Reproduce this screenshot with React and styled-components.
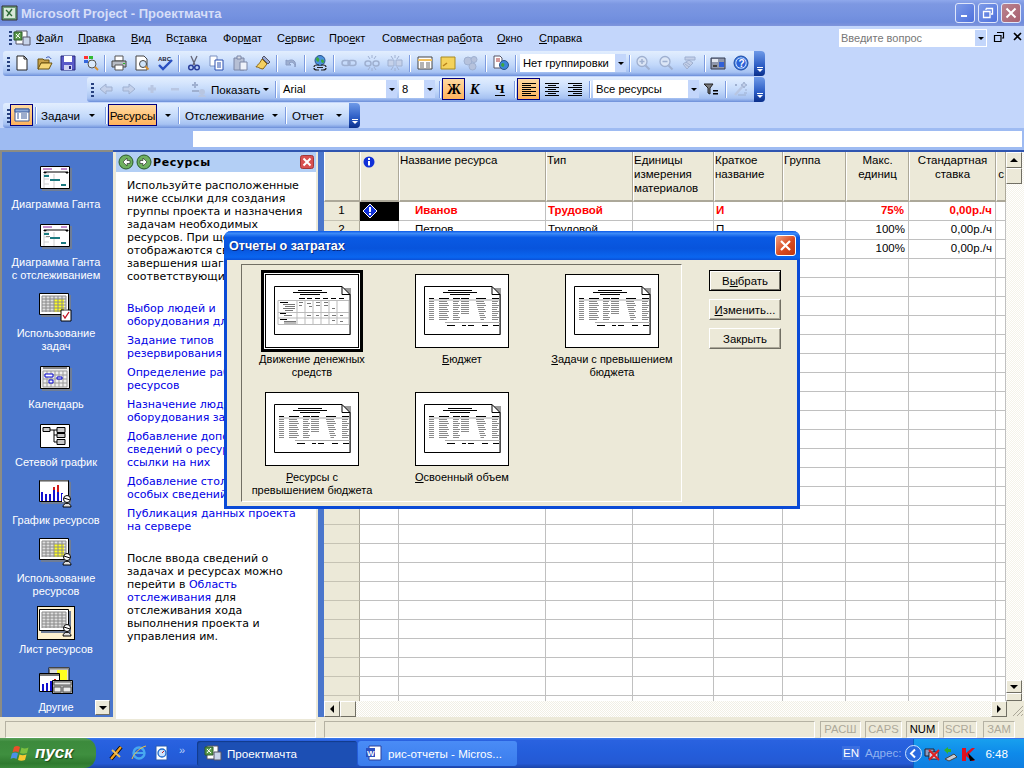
import React from 'react';
import styled, { createGlobalStyle, css } from 'styled-components';

const Global = createGlobalStyle`
  html, body { margin: 0; padding: 0; background: #fff; }
  * { box-sizing: border-box; }
  u { text-decoration: underline; text-underline-offset: 1px; }
`;
const UI = `"Liberation Sans", Arial, sans-serif`;
const WIDE = `"DejaVu Sans", Verdana, sans-serif`;

const Screen = styled.div`
  position: relative; width: 1024px; height: 768px; overflow: hidden;
  display: flex; flex-direction: column; font-family: ${UI}; font-size: 11px; color: #000;
  background: #c3d6fb;
`;
const TitleBar = styled.div`
  height: 26px; flex: none; display: flex; align-items: center; padding: 0 3px 0 2px;
  background: linear-gradient(180deg,#8fa8ec 0,#7d98e2 15%,#7592e0 60%,#6f8cdc 85%,#7f95dc 100%);
`;
const TitleText = styled.div`
  flex: 1; margin-left: 3px; font: bold 13px ${UI}; color: #d6def8; white-space: nowrap;
`;
const WinBtn = styled.div`
  width: 20px; height: 20px; margin-left: 3px; border: 1px solid #dfe6fa; border-radius: 3px;
  display: flex; align-items: center; justify-content: center;
  background: ${p => p.$red ? 'linear-gradient(135deg,#b9838f,#a8606f)' : 'linear-gradient(135deg,#7e9be8,#4d70dc)'};
`;
const Dock = styled.div`
  flex: none; height: 102px; background: #c3d6fb; display: flex; flex-direction: column;
`;
const MenuBar = styled.div`
  height: 24px; flex: none; display: flex; align-items: center; position: relative; padding-left: 7px;
`;
const Grip = styled.div`
  width: 3px; height: 14px; flex: none; margin: 0 ${p => p.$r ?? 0}px 0 2px;
  background: repeating-linear-gradient(180deg,#27417f 0 2px,transparent 2px 4px);
`;
const MenuItem = styled.span`
  position: absolute; top: 6px; left: ${p => p.$x}px; white-space: nowrap; font-size: 11px; line-height: 13px;
`;
const HelpBox = styled.div`
  position: absolute; left: 839px; top: 3px; width: 148px; height: 18px; background: #fff;
  display: flex; align-items: center; padding-left: 2px; color: #777; font-size: 11px;
`;
const HelpDrop = styled.div`
  position: absolute; right: 0; top: 0; width: 12px; height: 18px; background: #c3d6fb; border: 1px solid #fff; border-width: 1px 1px 1px 0;
  display: flex; align-items: center; justify-content: center;
`;
const Arrow = styled.i`
  display: block; flex: none; width: 0; height: 0; border: 3px solid transparent; border-top: 3px solid #000; border-bottom: 0;
`;
const MdiBtns = styled.div`
  position: absolute; left: 994px; top: 6px; width: 28px; display: flex; justify-content: space-between;
`;
const Toolbar = styled.div`
  height: 25px; flex: none; margin: 1px 0 0 ${p => p.$x}px; width: ${p => p.$w}px;
  display: flex; align-items: center; border-radius: 3px 4px 4px 3px; padding-left: 2px; position: relative;
  background: linear-gradient(180deg,#e2eefe 0,#d5e5fd 25%,#c2d8fa 55%,#a6c2f2 85%,#7e9fe2 96%,#6a8cd6 100%);
`;
const Sep = styled.i`
  display: block; flex: none; width: 1px; height: 17px; margin: 0 ${p => p.$r ?? 2}px 0 ${p => p.$l ?? 2}px; background: #7d9ce0; box-shadow: 1px 0 0 #fff;
`;
const Btn = styled.div`
  width: ${p => p.$w ?? 23}px; height: 22px; flex: none; display: flex; align-items: center; justify-content: center;
  font-size: 11.6px; white-space: nowrap; margin-top: -1px;
  ${p => p.$on && css`background: linear-gradient(180deg,#ffd9a0,#ffb35c); border: 1px solid #000080;`}
`;
const Chevron = styled.div`
  position: absolute; right: 0; top: 0; bottom: 0; width: 11px; border-radius: 0 4px 4px 0;
  background: linear-gradient(180deg,#6e9ae8,#2b5cc4 60%,#0a2f8a);
  display: flex; flex-direction: column; align-items: center; justify-content: flex-end; padding-bottom: 4px; gap: 1px;
`;
const ChevLine = styled.i`display:block;width:6px;height:1px;background:#fff;`;
const ChevTri = styled.i`display:block;width:0;height:0;border:3px solid transparent;border-top-color:#fff;border-bottom:0;`;
const Combo = styled.div`
  width: ${p => p.$w}px; height: 18px; flex: none; background: #fff; position: relative; margin-top: -1px; margin-right: ${p => p.$mr ?? 0}px;
  display: flex; align-items: center; padding-left: 3px; font-size: 11.2px; white-space: nowrap; overflow: hidden;
`;
const ComboDrop = styled.div`
  position: absolute; right: 0; top: 0; bottom: 0; width: 12px; background: #c3d6fb; border-left: 1px solid #fff;
  display: flex; align-items: center; justify-content: center;
`;
const Cmd = styled.div`
  width: ${p => p.$w}px; flex: none; margin: -1px 0 0 ${p => p.$l ?? 0}px; padding-right: ${p => p.$r ?? 0}px;
  display: flex; align-items: center; justify-content: ${p => p.$end ? 'flex-end' : 'space-between'}; font-size: 11.6px; white-space: nowrap;
`;

const EntryBand = styled.div`
  height: 22px; flex: none; background: #9ebbf2; padding: 3px 2px 3px 193px;
`;
const Entry = styled.div`height:16px;background:#fff;`;

const Workspace = styled.div`
  flex: 1; min-height: 0; display: flex; background: #ece9d8; border-top: 2px solid #2f55b0;
`;
const ViewBar = styled.div`
  width: 113px; flex: none; background: #4a76cc; border-left: 2px solid #8c8c84; border-top: 2px solid #8c8c84; position: relative;
  display: flex; flex-direction: column; align-items: center; padding: 14px 3px 0 0; margin: -2px 0 2px;
`;
const ViewItem = styled.div`
  width: 100%; display: flex; flex-direction: column; align-items: center; margin-bottom: 13px;
  color: #fff; line-height: 13px; font-size: 11px; text-align: center;
`;
const ViewIcon = styled.div`
  height: ${p => p.$sel ? 34 : 24}px; width: ${p => p.$sel ? 38 : 32}px; margin-bottom: ${p => p.$sel ? 3 : 8}px; margin-top: ${p => p.$sel ? -5 : 0}px;
  display: flex; align-items: center; justify-content: center;
  ${p => p.$sel && css`background:#fdf1d0;border:1px solid #000;`}
`;
const MoreBtn = styled.div`
  position: absolute; right: 3px; bottom: 2px; width: 15px; height: 15px; background: #ece9d8;
  border: 1px solid; border-color: #fff #716f64 #716f64 #fff; display:flex;align-items:center;justify-content:center;
`;
const TaskPane = styled.div`
  width: 200px; flex: none; margin-left: 3px; margin-right: 2px; background: #fff; display: flex; flex-direction: column; overflow: hidden;
`;
const PaneHead = styled.div`
  height: 20px; flex: none; background: #b3cff5; display: flex; align-items: center; padding-left: 2px; gap: 2px; position: relative;
  font: bold 11px ${WIDE}; letter-spacing: .6px;
`;
const PaneTitle = styled.span`margin-left:-1px;`;
const PaneClose = styled.div`position:absolute;right:2px;top:3px;`;
const PaneBody = styled.div`
  padding: 7px 0 0 11px; font: 11px/13px ${WIDE}; white-space: nowrap;
`;
const PaneLink = styled.a`display:block;color:#0000e6;margin-bottom:6px;`;
const InlineLink = styled.span`color:#0000e6;`;
const PanePara = styled.div`margin-bottom:${p=>p.$mb}px;`;
const SplitBlue = styled.div`width:6px;flex:none;background:#4a76cc;margin-bottom:2px;`;
const SheetArea = styled.div`
  flex: 1; min-width: 0; display: flex; flex-direction: column; background:#ece9d8;
`;
const SheetTop = styled.div`flex:1;min-height:0;display:flex;`;
const Grid = styled.div`flex:1;min-width:0;background:#fff;overflow:hidden;`;
const HeadRow = styled.div`display:flex;height:50px;`;
const HeadCell = styled.div`
  width:${p=>p.$w}px;flex:none;background:#ece9d8;border-right:1px solid #aca899;border-bottom:2px solid #aca899;border-left:1px solid #fff;
  padding:${p=>p.$pt??1}px 0 0;line-height:14px;font-size:11.5px;text-align:${p=>p.$c?'center':'left'};overflow:hidden;
`;
const Row = styled.div`display:flex;height:19px;`;
const RowNum = styled.div`
  width:36px;flex:none;background:#ece9d8;border-right:1px solid #aca899;border-bottom:1px solid #c6c3b4;text-align:center;line-height:15px;font-size:11.6px;
`;
const Cell = styled.div`
  width:${p=>p.$w}px;flex:none;border-right:1px solid #c0c0c0;border-bottom:1px solid #c0c0c0;line-height:16px;font-size:11.5px;white-space:nowrap;overflow:hidden;
  padding:0 ${p=>p.$pr??2}px 0 ${p=>p.$pl??2}px;text-align:${p=>p.$r?'right':'left'};
  ${p=>p.$hot&&css`color:#f00;font-weight:bold;`}
  ${p=>p.$sel&&css`background:#000;border:1px solid #000;border-width:1px 2px 2px 1px;display:flex;align-items:center;padding:0 0 0 1px;`}
`;
const VScroll = styled.div`
  width:18px;flex:none;display:flex;flex-direction:column;
  background:repeating-conic-gradient(#f5f3ea 0 25%,#fff 0 50%) 0 0/2px 2px;
`;
const ScrollBtn = styled.div`
  width:${p=>p.$w??16}px;height:${p=>p.$h??16}px;flex:none;background:#ece9d8;border:1px solid;border-color:#fff #716f64 #716f64 #fff;
  display:flex;align-items:center;justify-content:center;
`;
const ScrollFill = styled.div`flex:1;`;
const HScroll = styled.div`
  height:16px;flex:none;margin-bottom:2px;display:flex;
  background:repeating-conic-gradient(#f1efe4 0 25%,#fff 0 50%) 0 0/2px 2px;
`;
const ResizeGrip = styled.div`
  width:17px;height:18px;flex:none;background:#ece9d8;
`;
const UpTri = styled.i`display:block;width:0;height:0;border:4px solid transparent;border-bottom:4px solid #000;border-top:0;`;
const DownTri = styled.i`display:block;width:0;height:0;border:4px solid transparent;border-top:4px solid #000;border-bottom:0;`;
const LeftTri = styled.i`display:block;width:0;height:0;border:4px solid transparent;border-right:4px solid #000;border-left:0;`;
const RightTri = styled.i`display:block;width:0;height:0;border:4px solid transparent;border-left:4px solid #000;border-right:0;`;

const StatusBar = styled.div`
  height:19px;flex:none;background:#ece9d8;display:flex;align-items:center;padding-top:1px;padding-left:5px;
`;
const StatusField = styled.div`
  height:17px;flex:none;width:${p=>p.$w}px;margin-right:${p=>p.$mr??4}px;border:1px solid;border-color:#b5b2a3 #fff #fff #b5b2a3;
  display:flex;align-items:center;justify-content:center;font-size:11.2px;color:${p=>p.$on?'#000':'#aca899'};
`;
const Taskbar = styled.div`
  height:30px;flex:none;display:flex;align-items:center;position:relative;color:#fff;
  background:linear-gradient(180deg,#3b7cee 0,#2a62e0 8%,#245edb 45%,#2459d4 85%,#1b44a8 100%);
`;
const StartBtn = styled.div`
  width:96px;height:30px;flex:none;border-radius:0 12px 12px 0;display:flex;align-items:center;padding-left:11px;gap:4px;
  background:linear-gradient(180deg,#5ba25b 0,#3c8a3c 12%,#3f8f3f 55%,#2f7a2f 85%,#3a8a3a 100%);
  font:italic bold 17px ${UI};text-shadow:1px 1px 1px #1b4a1b;
`;
const Quick = styled.div`width:101px;flex:none;display:flex;align-items:center;padding-left:12px;gap:7px;`;
const Chev2 = styled.span`font-size:11px;color:#b9d0f8;margin:-6px 0 0 2px;`;
const TaskBtn = styled.div`
  width:${p=>p.$w}px;height:25px;flex:none;margin-right:1px;border-radius:3px;display:flex;align-items:center;padding-left:8px;gap:6px;font-size:11.6px;white-space:nowrap;
  background:${p=>p.$on?'#1c4fb4':'linear-gradient(180deg,#4a8cf6,#3a7cec)'};
  ${p=>p.$on&&css`box-shadow:inset 1px 1px 1px #123a8a;`}
`;
const Tray = styled.div`
  position:absolute;right:0;top:1px;bottom:0;width:111px;background:linear-gradient(180deg,#18a0ee,#0e8aea 50%,#0f7ee0);
  display:flex;align-items:center;gap:2px;border-left:1px solid #0c5ec0;
`;
const Lang = styled.span`position:absolute;left:842px;top:8px;background:#3a6ee0;padding:0 1px;font-size:11.6px;line-height:14px;`;
const Addr = styled.span`position:absolute;left:865px;top:8px;color:#90b2f0;font-size:11.6px;line-height:14px;`;
const Clock = styled.span`position:absolute;right:16px;top:8px;font-size:11.6px;line-height:14px;`;

const Dialog = styled.div`
  position:absolute;left:224px;top:231px;width:576px;height:278px;border-radius:7px 7px 0 0;
  background:#ece9d8;display:flex;flex-direction:column;border:3px solid #0a4ad6;border-top:0;
`;
const DlgTitle = styled.div`
  height:29px;flex:none;margin:0 -3px;border-radius:7px 7px 0 0;display:flex;align-items:center;padding:0 4px 0 5px;
  background:linear-gradient(180deg,#0a58e8 0,#3e8cf8 8%,#0a5ae4 22%,#0854dc 60%,#0a66f0 90%,#0a50d8 100%);
  color:#fff;font:bold 12.6px ${UI};text-shadow:1px 1px 0 #0a2a80;justify-content:space-between;
`;
const DlgClose = styled.div`
  width:21px;height:21px;border:1px solid #fff;border-radius:3px;background:linear-gradient(135deg,#f0a080,#d84a20 55%,#c03810);display:flex;align-items:center;justify-content:center;
`;
const DlgBody = styled.div`flex:1;min-height:0;display:flex;padding:4px 0 4px 14px;`;
const ListBox = styled.div`
  width:441px;flex:none;border:1px solid;border-color:#716f64 #fff #fff #716f64;box-shadow:inset 1px 1px 0 #ece9d8;
  display:grid;grid-template-columns:repeat(3,140px);column-gap:10px;grid-auto-rows:118px;padding-top:9px;align-content:start;
`;
const ReportItem = styled.div`display:flex;flex-direction:column;align-items:center;text-align:center;font-size:11px;line-height:13px;`;
const ReportThumbBox = styled.div`
  width:94px;height:74px;flex:none;background:#fff;border:1px solid #000;margin-bottom:5px;
  ${p=>p.$sel&&css`box-shadow:0 0 0 1px #fff,0 0 0 4px #000;`}
`;
const BtnCol = styled.div`margin-left:27px;padding-top:6px;display:flex;flex-direction:column;gap:8px;`;
const DlgBtn = styled.div`
  width:72px;height:21px;background:#ece9d8;border:1px solid;border-color:${p=>p.$def?'#000':'#fff #716f64 #716f64 #fff'};
  ${p=>p.$def&&css`box-shadow:inset 1px 1px 0 #fff,inset -1px -1px 0 #716f64;`}
  ${p=>!p.$def&&css`box-shadow:inset -1px -1px 0 #aca899;`}
  display:flex;align-items:center;justify-content:center;font-size:11.4px;
`;
const Svg = styled.svg`display:block;flex:none;overflow:visible;`;
const InfoSvg = styled(Svg)`margin:2px 0 0 1px;`;
const TrayChevron = styled(Svg)`margin-left:-9px;`;

/* ------- toolbar icons ------- */
const Ic = ({ children, s = 16 }) => <Svg width={s} height={s} viewBox="0 0 16 16">{children}</Svg>;
const Gr = '#9fb0d0';
const icons = {
  new: <><path d="M3 1h7l3 3v11H3z" fill="#fff" stroke="#222"/><path d="M10 1v3h3" fill="none" stroke="#222"/></>,
  open: <><path d="M1 4h5l1 1h5v3H4l-2 6H1z" fill="#c8a24a" stroke="#6a5210"/><path d="M4 8h11l-3 6H1z" fill="#f6d776" stroke="#6a5210"/><path d="M9 3c2-2 4-1 5 1" fill="none" stroke="#2a4ab0"/></>,
  save: <><path d="M1 1h14v14H1z" fill="#5a5ac8" stroke="#26267a"/><path d="M4 1h8v6H4z" fill="#fff"/><path d="M4 10h8v5H4z" fill="#cfd2f2"/><path d="M9 11h2v3H9z" fill="#26267a"/></>,
  find: <><path d="M1 1h4v3H1z" fill="#f33"/><path d="M6 1h4v3H6z" fill="#3b3"/><path d="M1 5h4v3H1z" fill="#36d"/><path d="M6 5h4v3H6z" fill="#fc3"/><circle cx="9" cy="9" r="4" fill="#dbeafc" stroke="#555"/><path d="M12 12l3 3" stroke="#d89030" strokeWidth="2"/></>,
  print: <><path d="M4 1h8v5H4z" fill="#fff" stroke="#555"/><path d="M1 6h14v6H1z" fill="#b8bcc4" stroke="#444"/><path d="M4 10h8v5H4z" fill="#fff" stroke="#555"/><path d="M12 8h2v1h-2z" fill="#2b2"/></>,
  prev: <><path d="M2 1h8l3 3v11H2z" fill="#fff" stroke="#444"/><circle cx="9" cy="9" r="3.5" fill="#cfe4fb" stroke="#444"/><path d="M11.5 11.5l3 3" stroke="#d89030" strokeWidth="2"/></>,
  spell: <><text x="1" y="6" fontSize="6" fontWeight="bold" fontFamily="Liberation Sans" fill="#223">ABC</text><path d="M2 10l4 4 9-9" fill="none" stroke="#2a50c0" strokeWidth="2.4"/></>,
  cut: <><path d="M5 1l4 9M11 1L7 10" stroke="#667" strokeWidth="1.3"/><circle cx="5" cy="12.5" r="2.3" fill="none" stroke="#2a3f9a" strokeWidth="1.5"/><circle cx="11" cy="12.5" r="2.3" fill="none" stroke="#2a3f9a" strokeWidth="1.5"/></>,
  copy: <><path d="M1 1h7v10H1z" fill="#fff" stroke="#7a90c0"/><path d="M6 5h8v10H6z" fill="#fff" stroke="#2a4fae"/><path d="M8 8h4M8 10h4M8 12h4" stroke="#2a4fae"/></>,
  paste: <><path d="M2 3h10v12H2z" fill="#b6bfd4" stroke="#7a86a6"/><path d="M5 1h4v3H5z" fill="#d8dde8" stroke="#7a86a6"/><path d="M8 7h7v8H8z" fill="#eef2fa" stroke="#7a86a6"/></>,
  brush: <><path d="M9 1l6 6-2 2-6-6z" fill="#98a8d0" stroke="#556"/><path d="M7 4l5 5-4 5c-3 0-6-3-7-2 0-1 3-2 6-8z" fill="#f4d060" stroke="#8a6410"/></>,
  undo: <><path d="M3 5v5h5L6 8c3-2 6 0 6 4 2-5-2-9-7-6z" fill={Gr} stroke="#8a9cc4"/></>,
  globe: <><circle cx="8" cy="5.5" r="5" fill="#4a90dc" stroke="#28548a"/><path d="M5 2c2 1 3 2 2 4S4 6 4 4zM9 5c2-1 3 0 3 2-1 2-3 1-3-2z" fill="#3ca83c"/><path d="M2 12c0-1.500 1-2 3-2h2M14 12c0-1.500-1-2-3-2H9M2 13c0 1 1 2 3 2h2M14 13c0 1-1 2-3 2H9" fill="none" stroke="#222" strokeWidth="1.2"/><path d="M5 12.500h6" stroke="#222"/></>,
  link: <><rect x="1" y="5.500" width="8" height="5" rx="2.500" fill="none" stroke={Gr} strokeWidth="1.500"/><rect x="7" y="5.500" width="8" height="5" rx="2.500" fill="none" stroke={Gr} strokeWidth="1.500"/></>,
  unlink: <><rect x="1" y="6" width="6" height="5" rx="2.500" fill="none" stroke={Gr} strokeWidth="1.500"/><rect x="9" y="6" width="6" height="5" rx="2.500" fill="none" stroke={Gr} strokeWidth="1.500"/><path d="M8 0v3M4 1l2 3M12 1l-2 3M8 13v3M4 15l2-3M12 15l-2-3" stroke={Gr}/></>,
  split: <><path d="M1 5h6v6H1zM9 5h6v6H9z" fill="#c6d2ea" stroke={Gr}/><path d="M8 0v3M4 1l2 3M12 1l-2 3M8 13v3M4 15l2-3M12 15l-2-3" stroke={Gr}/></>,
  list: <><path d="M1 2h14v12H1z" fill="#fff" stroke="#444"/><path d="M1 5h14" stroke="#f0c060" strokeWidth="2"/><path d="M3 8h4M3 10h4M3 12h4M9 8h4M9 10h4M9 12h4" stroke="#666"/></>,
  pane: <><path d="M1 2h14v12H1z" fill="#fff" stroke="#3a5a9a"/><path d="M1 2h14v3H1z" fill="#8aa8d8" stroke="#3a5a9a"/><path d="M3 7h2M3 9h2M3 11h2M7 7h6M7 9h6M7 11h6" stroke="#3a5a9a"/></>,
  note: <><path d="M1 2h14v12H1z" fill="#f4d25c" stroke="#a88a20"/><path d="M3 11l4-3" stroke="#b8801a" strokeWidth="1.500"/></>,
  gears: <><circle cx="5" cy="6" r="4" fill="#b6c2dc" stroke={Gr}/><circle cx="11" cy="4.500" r="3" fill="#b6c2dc" stroke={Gr}/><circle cx="9.500" cy="11.500" r="3.500" fill="#b6c2dc" stroke={Gr}/></>,
  pub: <><path d="M1 1h6l2 2v10H1z" fill="#fff" stroke="#556"/><path d="M3 4h4M3 6h4" stroke="#a33"/><circle cx="11" cy="10" r="4.500" fill="#3d86d8" stroke="#28548a"/><path d="M9 8c2 0 3 1 2 3s-3 0-3-1z" fill="#3ca83c"/></>,
  zin: <><circle cx="7" cy="6.500" r="5" fill="#dce6f6" stroke={Gr} strokeWidth="1.300"/><path d="M4.500 6.500h5M7 4v5" stroke={Gr} strokeWidth="1.500"/><path d="M10.500 10.500l4 4" stroke={Gr} strokeWidth="2"/></>,
  zout: <><circle cx="7" cy="6.500" r="5" fill="#dce6f6" stroke={Gr} strokeWidth="1.300"/><path d="M4.500 6.500h5" stroke={Gr} strokeWidth="1.500"/><path d="M10.500 10.500l4 4" stroke={Gr} strokeWidth="2"/></>,
  goto: <><path d="M4 2h10v3H4zM2 9l6-4 4 3-6 6z" fill="#c3cfe8" stroke={Gr}/><path d="M5 7l4 3M4 9l4 3" stroke={Gr}/></>,
  cam: <><path d="M1 3h14v11H1z" fill="#9098ac" stroke="#333a50"/><path d="M2 4h6v3H2z" fill="#e4e8f0"/><rect x="9" y="7" width="5" height="5" fill="#3060d8"/><path d="M3 10h4v2H3z" fill="#444"/></>,
  help: <><circle cx="8" cy="8" r="7" fill="#3e7fe6" stroke="#1c47a0"/><circle cx="8" cy="8" r="5.500" fill="#fff"/><circle cx="8" cy="8" r="4.800" fill="#2a62d8"/><text x="5.500" y="11.500" fontSize="10" fontWeight="bold" fontFamily="Liberation Sans" fill="#fff">?</text></>,
  left: <path d="M8 3v3h6v4H8v3L2 8z" fill="#c3d0ea" stroke={Gr}/>,
  right: <path d="M8 3v3H2v4h6v3l6-5z" fill="#c3d0ea" stroke={Gr}/>,
  plus: <path d="M6.500 4h3v2.500H12v3H9.500V12h-3V9.500H4v-3h2.500z" fill="#b8c6e2"/>,
  minus: <path d="M4 7h8v2.500H4z" fill="#b8c6e2"/>,
  pm: <><path d="M4 1h2v2h2v2H6v2H4V5H2V3h2zM2 9h7v2H2z" fill="#9fb0d0"/><circle cx="12" cy="11" r="3" fill="#b8c6e2"/><path d="M8 16c0-3 8-3 8 0z" fill="#b8c6e2"/></>,
  b: <text x="1" y="13" fontSize="14" fontWeight="bold" fontFamily="Liberation Serif" fill="#000">Ж</text>,
  i: <text x="1" y="13" fontSize="14" fontStyle="italic" fontWeight="bold" fontFamily="Liberation Serif" fill="#000">К</text>,
  u: <><text x="3" y="12" fontSize="13" fontWeight="bold" fontFamily="Liberation Serif" fill="#000">Ч</text><path d="M3 14.500h10" stroke="#000"/></>,
  al: <path d="M1 2.500h14M1 4.500h9M1 6.500h14M1 8.500h9M1 10.500h14M1 12.500h9M1 14.500h14" stroke="#000" fill="none"/>,
  ac: <path d="M1 2.500h14M4 4.500h8M1 6.500h14M4 8.500h8M1 10.500h14M4 12.500h8M1 14.500h14" stroke="#000" fill="none"/>,
  ar: <path d="M1 2.500h14M6 4.500h9M1 6.500h14M6 8.500h9M1 10.500h14M6 12.500h9M1 14.500h14" stroke="#000" fill="none"/>,
  filter: <><path d="M1 3h9L7 7v6L5 12V7z" fill="#777" stroke="#222"/><path d="M10 9h5v1.500h-5zM10 12h5v1.500h-5z" fill="#000"/></>,
  wiz: <><path d="M3 14L11 5" stroke="#b8c6e2" strokeWidth="2.500"/><path d="M12 1l1 2 2 1-2 1-1 2-1-2-2-1 2-1zM4 3l1 1-1 1-1-1zM13 9h2M12 12h3M6 14h8" stroke={Gr} fill="#c3d0ea"/></>,
  doc: <><path d="M2 1h11v13H2z" fill="#fff" stroke="#556"/><path d="M0 2h8v8H0z" fill="#5a9a4a" stroke="#2c5a2c"/><path d="M2 8l4-5M2 4l4 4" stroke="#fff"/><path d="M9 7h7v8H9z" fill="#c8d4ea" stroke="#556"/></>,
};
const T = ({ n, on, w }) => <Btn $on={on} $w={w}><Ic>{icons[n]}</Ic></Btn>;

/* ------- view bar icons ------- */
const Card = ({ children, w = 32, h = 25 }) => (
  <Svg width={w} height={h} viewBox="0 0 32 25">
    <path d="M2 2h30v23H2z" fill="#6f7d96"/>
    <path d="M.5.500h29v22H.5z" fill="#fff" stroke="#000"/>
    {children}
  </Svg>
);
const sheetGrid = (x0, x1, y0, y1, dx, dy) => {
  const d = [];
  for (let x = x0; x <= x1; x += dx) d.push(`M${x} ${y0}V${y1}`);
  for (let y = y0; y <= y1; y += dy) d.push(`M${x0} ${y}H${x1}`);
  return d.join('');
};
const Person = () => <><circle cx="28" cy="19" r="3.500" fill="#fff" stroke="#000"/><path d="M24 27c0-5 8-5 8 0z" fill="#ddd" stroke="#000"/><path d="M25 18l6 2" stroke="#000"/></>;
const GanttIcon = ({ alt }) => (
  <Card>
    <path d="M3 3h9M21 3h6" stroke="#8a1a9a"/><path d="M4 6h24" stroke="#000"/><path d="M3 6l2 2 2-2zM25 6l2 2 2-2z" fill="#000"/>
    <path d="M4 8h5M4 13h5M4 18h5M14 8v14M4 8v14" stroke="#cfcfcf"/>
    <path d="M4 9h5v2H4z" fill="#1a7a80"/><path d="M10 13h10v2H10z" fill="#1a7a80"/><path d="M21 18h5v2h-5z" fill="#1a7a80"/>
    {alt && <path d="M6 12h4v1H6z" fill="#888"/>}
  </Card>
);
const TableCard = ({ children, yellow, badge }) => (
  <Svg width={34} height={28} viewBox="0 0 34 28">
    <path d="M2 2h30v22H2z" fill="#6f7d96"/>
    <path d="M.5.500h29v21H.5z" fill="#fff" stroke="#000"/>
    <path d="M3 3h24v16H3z" fill="#dedede"/>
    {yellow && <path d="M15 6h10v13H15z" fill="#ffff20"/>}
    <path d={sheetGrid(3, 27, 3, 19, 4, 3)} stroke="#8a8a8a" fill="none"/>
    {children}
    {badge === 'clip' && <><path d="M22 17h10v11H22z" fill="#fff" stroke="#000"/><path d="M24 22l2 3 4-6" stroke="#c01020" fill="none" strokeWidth="1.300"/><path d="M25 16h4v2h-4z" fill="#999"/></>}
    {badge === 'person' && <Person/>}
  </Svg>
);
const CalIcon = () => (
  <Svg width={32} height={25} viewBox="0 0 32 25">
    <path d="M2 2h30v23H2z" fill="#6f7d96"/><path d="M.5.500h29v22H.5z" fill="#eee" stroke="#000"/>
    <path d={sheetGrid(3, 27, 5, 21, 4, 4)} stroke="#999" fill="none"/>
    <path d="M5 8h8v3H5z" fill="#fff" stroke="#0000d0"/><path d="M17 11h5v2h-5z" fill="#fff" stroke="#0000d0"/><path d="M9 14h4v3H9z" fill="#fff" stroke="#0000d0"/>
    <path d="M3 2h24" stroke="#888" strokeWidth="2"/>
  </Svg>
);
const NetIcon = () => (
  <Svg width={32} height={25} viewBox="0 0 32 25">
    <path d="M.5.500h29v23H.5z" fill="#fff" stroke="#000"/>
    <path d="M10 6h7M14 6v12M14 11h3M14 18h3" stroke="#000" fill="none"/>
    <path d="M3 3.500h7v4H3zM17 3.500h8v5h-8zM17 9.500h8v4h-8zM17 15.500h8v5h-8z" fill="#c8c8c8" stroke="#000"/>
  </Svg>
);
const GraphIcon = () => (
  <Svg width={34} height={28} viewBox="0 0 34 28">
    <path d="M2 2h30v22H2z" fill="#6f7d96"/><path d="M.5.500h29v21H.5z" fill="#fff" stroke="#000"/>
    <path d="M1 1h28" stroke="#888" strokeWidth="1.500"/>
    <path d="M2 12h2v9H2zM6 14h2v7H6zM10 14h2v7h-2zM14 9h2v12h-2zM22 13h2v8h-2z" fill="#1010d0"/>
    <path d="M18 5h2v16h-2z" fill="#d01818"/><path d="M14 7h2v3h-2z" fill="#d01818"/><path d="M18 12h2v9h-2z" fill="#1010d0"/>
    <path d="M23 14h6v8h-6z" fill="#fff"/><Person/>
  </Svg>
);
const OtherIcon = () => (
  <Svg width={34} height={28} viewBox="0 0 34 28">
    <path d="M10 .500h20v18H10z" fill="#dedede" stroke="#000"/><path d="M18 3h10v12H18z" fill="#ffff20"/><path d="M10 .500h20v2H10z" fill="#888"/>
    <path d="M.5 6.500h20v18H.5z" fill="#fff" stroke="#000"/><path d="M1 7h19v2H1z" fill="#777"/>
    <path d="M3 17h2v7H3zM7 16h2v8H7zM11 14h2v10h-2z" fill="#1010d0"/><path d="M15 12h2v12h-2z" fill="#d01818"/>
    <path d="M13.500 13.500h20v13h-20z" fill="#b0b0b0" stroke="#000"/><path d="M15 15h17v3H15zM15 20h7v5h-7zM24 20h8v5h-8z" fill="#ececec" stroke="#555"/>
  </Svg>
);

/* ------- report thumbnails ------- */
const PageFrame = ({ children }) => (
  <Svg width={92} height={72} viewBox="0 0 92 72">
    <path d="M10 13h75v47H10z" fill="#9a9a9a"/>
    <path d="M8.500 11.500H76l8 8v40H8.500z" fill="#fff" stroke="#000"/>
    <path d="M76 11.500v8h8" fill="none" stroke="#000"/>
    <path d="M32 15.500h24M27 17.500h34M34 19.500h20" stroke="#000"/>
    {children}
  </Svg>
);
const Generic = () => {
  const cols = [[13, 5], [23, 10], [37, 7], [45, 8], [60, 10], [76, 7]];
  const d = [];
  for (let y = 26; y <= 44; y += 2) {
    cols.forEach(([x, w], i) => {
      const sh = (y * (i + 3)) % 3;
      const hide = i === 3 && y > 38;
      if (!hide) d.push(`M${x + (i === 4 ? (y - 26) / 4 : 0)} ${y + .5}h${Math.max(1, w - sh - (i === 4 ? (y - 26) / 4 : 0))}`);
    });
  }
  return (
    <PageFrame>
      <path d={cols.map(([x, w]) => `M${x} 23.500h${w}`).join('')} stroke="#000"/>
      <path d="M13 25h70" stroke="#aaa"/>
      <path d={d.join('')} stroke="#8a8a8a"/>
      <path d="M29 47.500h55" stroke="#aaa" strokeWidth="1"/>
      <path d="M31 50.500h8M46 50.500h4M52 50.500h6M66 50.500h6M77 50.500h6" stroke="#000"/>
    </PageFrame>
  );
};
const CashFlow = () => (
  <PageFrame>
    <path d="M33 23.500h6M41 23.500h5M49 23.500h5M57 23.500h5M65 23.500h5M73 23.500h5" stroke="#000"/>
    <path d="M12 25.500h71v24H12zM12 37.500h71M12 43h71M31 25v24M39 25v24M47 25v24M55 25v24M63 25v24M71 25v24" fill="none" stroke="#bbb"/>
    <path d="M14 27.500h8M14 38.500h6M14 44.500h7" stroke="#000"/>
    <path d="M17 29.500h12M19 31.500h10M17 33.500h12M19 35.500h8M18 40.500h8M18 46.500h12M18 48h12M33 27.500h4M33 30.500h3M41 28.500h4M43 31.500h3M50 27.500h4M50 30.500h4M58 27.500h4M58 30.500h4M66 33.500h3M41 40.500h4M50 40.500h3M58 40.500h4M66 40.500h4M74 40.500h3M66 45.500h3M74 46.500h3" stroke="#777"/>
  </PageFrame>
);

const cols = { name: 147, type: 87, units: 81, short: 69, group: 63, max: 63, rate: 87, tail: 10 };
const emptyRows = Array.from({ length: 24 });
const mark = (t, i) => <span>{t.slice(0, i)}<u>{t[i]}</u>{t.slice(i + 1)}</span>;

const View = ({ icon, children, sel }) => (
  <ViewItem><ViewIcon $sel={sel}>{icon}</ViewIcon><span>{children}</span></ViewItem>
);
const Bc = () => <><ChevLine/><ChevTri/></>;

export default function App() {
  return (
    <Screen>
      <Global />
      <TitleBar>
        <Ic><path d="M0 1h15v14H0z" fill="#6fa07a" stroke="#333"/><path d="M2 3h11v10H2z" fill="#d9e8d8"/><path d="M5 11l5-7M4 5l6 6" stroke="#2c6a38" strokeWidth="1.400"/></Ic>
        <TitleText>Microsoft Project - Проектмачта</TitleText>
        <WinBtn><Svg width="12" height="12" viewBox="0 0 12 12"><path d="M2 8h6v2H2z" fill="#fff"/></Svg></WinBtn>
        <WinBtn><Svg width="12" height="12" viewBox="0 0 12 12"><path d="M4 1.500h6.500V7H9M4 1.500V3M1.500 4.500H8V10.500H1.500z" fill="none" stroke="#fff" strokeWidth="1.300"/></Svg></WinBtn>
        <WinBtn $red><Svg width="12" height="12" viewBox="0 0 12 12"><path d="M1.500 1.500l9 9M10.500 1.500l-9 9" stroke="#fff" strokeWidth="2"/></Svg></WinBtn>
      </TitleBar>
      <Dock>
        <MenuBar>
          <Grip $r={2} />
          <Ic>{icons.doc}</Ic>
          {[['Файл', 36, 0], ['Правка', 78, 0], ['Вид', 131, 0], ['Вставка', 166, 2], ['Формат', 223, 3], ['Сервис', 277, 1], ['Проект', 329, 3], ['Совместная работа', 382, 13], ['Окно', 497, 0], ['Справка', 539, 0]].map(([t, x, i]) => (
            <MenuItem key={t} $x={x}>{mark(t, i)}</MenuItem>
          ))}
          <HelpBox>Введите вопрос<HelpDrop><Arrow /></HelpDrop></HelpBox>
          <MdiBtns>
            <Svg width="10" height="10" viewBox="0 0 10 10"><path d="M3 .500h6.500V6H8M.5 3.500H7v6H.5z" fill="none" stroke="#000" strokeWidth="1.200"/></Svg>
            <Svg width="9" height="9" viewBox="0 0 9 9"><path d="M1 1l7 7M8 1L1 8" stroke="#000" strokeWidth="1.600"/></Svg>
          </MdiBtns>
        </MenuBar>
        <Toolbar $x={3} $w={762}>
          <Grip />
          <T n="new"/><T n="open"/><T n="save"/><T n="find"/><Sep/>
          <T n="print"/><T n="prev"/><T n="spell"/><Sep $r={3}/>
          <T n="cut"/><T n="copy"/><T n="paste"/><T n="brush"/><Sep/>
          <T n="undo"/><Sep $r={3}/>
          <T n="globe"/><Sep $r={3}/>
          <T n="link"/><T n="unlink"/><T n="split"/><Sep $l={3} $r={3}/>
          <T n="list"/><T n="note"/><T n="gears"/><Sep $l={3} $r={3}/>
          <T n="pub"/><Sep $l={3} $r={4}/>
          <Combo $w={106}>Нет группировки<ComboDrop><Arrow/></ComboDrop></Combo><Sep $l={3} $r={1}/>
          <T n="zin"/><T n="zout"/><T n="goto"/><Sep $l={4} $r={1}/>
          <T n="cam"/><T n="help"/>
          <Chevron><Bc/></Chevron>
        </Toolbar>
        <Toolbar $x={87} $w={678}>
          <Grip />
          <T n="left"/><T n="right"/><T n="plus"/><T n="minus"/><T n="pm"/>
          <Cmd $w={58} $l={2}>Показать<Arrow/></Cmd><Sep $l={6} $r={4}/>
          <Combo $w={117} $mr={2}>Arial<ComboDrop><Arrow/></ComboDrop></Combo>
          <Combo $w={36}>8<ComboDrop><Arrow/></ComboDrop></Combo><Sep $l={4} $r={2}/>
          <T n="b" on/><T n="i"/><T n="u"/><Sep $l={3} $r={2}/>
          <T n="al" on/><T n="ac"/><T n="ar"/><Sep $l={3} $r={3}/>
          <Combo $w={106}>Все ресурсы<ComboDrop><Arrow/></ComboDrop></Combo>
          <T n="filter"/><Sep $l={3} $r={2}/>
          <T n="wiz"/>
          <Chevron><Bc/></Chevron>
        </Toolbar>
        <Toolbar $x={3} $w={357}>
          <Grip />
          <T n="pane" on/><Sep/>
          <Cmd $w={62} $l={3} $r={8}>Задачи<Arrow/></Cmd><Sep/>
          <Btn $on $w={49}>Ресурсы</Btn><Cmd $w={19} $r={5} $end><Arrow/></Cmd><Sep/>
          <Cmd $w={98} $l={4} $r={5}>Отслеживание<Arrow/></Cmd><Sep/>
          <Cmd $w={55} $l={4} $r={5}>Отчет<Arrow/></Cmd>
          <Chevron><Bc/></Chevron>
        </Toolbar>
      </Dock>
      <EntryBand><Entry /></EntryBand>
      <Workspace>
        <ViewBar>
          <View icon={<GanttIcon />}>Диаграмма Ганта</View>
          <View icon={<GanttIcon alt />}>Диаграмма Ганта<br/>с отслеживанием</View>
          <View icon={<TableCard yellow badge="clip" />}>Использование<br/>задач</View>
          <View icon={<CalIcon />}>Календарь</View>
          <View icon={<NetIcon />}>Сетевой график</View>
          <View icon={<GraphIcon />}>График ресурсов</View>
          <View icon={<TableCard yellow badge="person" />}>Использование<br/>ресурсов</View>
          <View sel icon={<TableCard badge="person" />}>Лист ресурсов</View>
          <View icon={<OtherIcon />}>Другие</View>
          <MoreBtn><DownTri /></MoreBtn>
        </ViewBar>
        <TaskPane>
          <PaneHead>
            <Ic><circle cx="8" cy="8" r="7" fill="#6fb060" stroke="#2a5a2a"/><path d="M9 4L5 8l4 4V9.500h3v-3H9z" fill="#fff" stroke="#222" strokeWidth=".6"/></Ic>
            <Ic><circle cx="8" cy="8" r="7" fill="#6fb060" stroke="#2a5a2a"/><path d="M7 4l4 4-4 4V9.500H4v-3h3z" fill="#fff" stroke="#222" strokeWidth=".6"/></Ic>
            <PaneTitle>Ресурсы</PaneTitle>
            <PaneClose><Svg width="14" height="14" viewBox="0 0 14 14"><rect x=".5" y=".5" width="13" height="13" rx="2" fill="#d85050" stroke="#a03838"/><path d="M3.500 3.500l7 7M10.500 3.500l-7 7" stroke="#fff" strokeWidth="2"/></Svg></PaneClose>
          </PaneHead>
          <PaneBody>
            <PanePara $mb={19}>
              Используйте расположенные<br/>ниже ссылки для создания<br/>группы проекта и назначения<br/>задачам необходимых<br/>ресурсов. При щелчке ссылки<br/>отображаются сведения о<br/>завершения шагов в<br/>соответствующих областях.
            </PanePara>
            <PaneLink>Выбор людей и<br/>оборудования для проекта</PaneLink>
            <PaneLink>Задание типов<br/>резервирования</PaneLink>
            <PaneLink>Определение рабочего<br/>ресурсов</PaneLink>
            <PaneLink>Назначение людей и<br/>оборудования задачам</PaneLink>
            <PaneLink>Добавление дополнительных<br/>сведений о ресурсах и<br/>ссылки на них</PaneLink>
            <PaneLink>Добавление столбцов<br/>особых сведений</PaneLink>
            <PaneLink>Публикация данных проекта<br/>на сервере</PaneLink>
            <PanePara $mb={0}>
              <br/>После ввода сведений о<br/>задачах и ресурсах можно<br/>перейти в <InlineLink>Область<br/>отслеживания</InlineLink> для<br/>отслеживания хода<br/>выполнения проекта и<br/>управления им.
            </PanePara>
          </PaneBody>
        </TaskPane>
        <SplitBlue />
        <SheetArea>
          <SheetTop>
            <Grid>
              <HeadRow>
                <HeadCell $w={36} />
                <HeadCell $w={39}><InfoSvg width="14" height="14" viewBox="0 0 14 14"><circle cx="7" cy="7" r="5.500" fill="#1030d8"/><path d="M6 3h2v2H6zM6 6h2v4.500H6z" fill="#fff"/></InfoSvg></HeadCell>
                <HeadCell $w={cols.name}>Название ресурса</HeadCell>
                <HeadCell $w={cols.type}>Тип</HeadCell>
                <HeadCell $w={cols.units}>Единицы измерения материалов</HeadCell>
                <HeadCell $w={cols.short}>Краткое название</HeadCell>
                <HeadCell $w={cols.group}>Группа</HeadCell>
                <HeadCell $w={cols.max} $c>Макс. единиц</HeadCell>
                <HeadCell $w={cols.rate} $c>Стандартная ставка</HeadCell>
                <HeadCell $w={cols.tail} $c $pt={15}>с</HeadCell>
              </HeadRow>
              <Row>
                <RowNum>1</RowNum>
                <Cell $w={39} $sel><Svg width="18" height="16" viewBox="0 0 18 16"><path d="M8 1l7 7-7 7-7-7z" fill="#1030d8" stroke="#fff"/><path d="M7 4h2v5H7zM7 10h2v2H7z" fill="#fff"/></Svg></Cell>
                <Cell $w={cols.name} $hot $pl={16}>Иванов</Cell>
                <Cell $w={cols.type} $hot>Трудовой</Cell>
                <Cell $w={cols.units} />
                <Cell $w={cols.short} $hot>И</Cell>
                <Cell $w={cols.group} />
                <Cell $w={cols.max} $r $hot $pr={4}>75%</Cell>
                <Cell $w={cols.rate} $r $hot $pr={3}>0,00р./ч</Cell>
                <Cell $w={cols.tail} />
              </Row>
              <Row>
                <RowNum>2</RowNum>
                <Cell $w={39} />
                <Cell $w={cols.name} $pl={16}>Петров</Cell>
                <Cell $w={cols.type}>Трудовой</Cell>
                <Cell $w={cols.units} />
                <Cell $w={cols.short}>П</Cell>
                <Cell $w={cols.group} />
                <Cell $w={cols.max} $r $pr={3}>100%</Cell>
                <Cell $w={cols.rate} $r $pr={3}>0,00р./ч</Cell>
                <Cell $w={cols.tail} />
              </Row>
              <Row>
                <RowNum>3</RowNum>
                <Cell $w={39} />
                <Cell $w={cols.name} />
                <Cell $w={cols.type} />
                <Cell $w={cols.units} />
                <Cell $w={cols.short} />
                <Cell $w={cols.group} />
                <Cell $w={cols.max} $r $pr={3}>100%</Cell>
                <Cell $w={cols.rate} $r $pr={3}>0,00р./ч</Cell>
                <Cell $w={cols.tail} />
              </Row>
              {emptyRows.map((_, i) => (
                <Row key={i}>
                  <RowNum />
                  <Cell $w={39} /><Cell $w={cols.name} /><Cell $w={cols.type} /><Cell $w={cols.units} />
                  <Cell $w={cols.short} /><Cell $w={cols.group} /><Cell $w={cols.max} /><Cell $w={cols.rate} /><Cell $w={cols.tail} />
                </Row>
              ))}
            </Grid>
            <VScroll>
              <ScrollBtn $h={16}><UpTri /></ScrollBtn>
              <ScrollBtn $h={16} />
              <ScrollFill />
              <ScrollBtn $h={13}><DownTri /></ScrollBtn>
              <ScrollBtn $h={8} />
            </VScroll>
          </SheetTop>
          <HScroll>
            <ScrollBtn><LeftTri /></ScrollBtn>
            <ScrollBtn />
            <ScrollFill />
            <ScrollBtn><RightTri /></ScrollBtn>
            <ResizeGrip><Svg width="17" height="16" viewBox="0 0 17 16"><path d="M16 5L6 15M16 9l-6 6M16 13l-2 2" stroke="#aca899"/></Svg></ResizeGrip>
          </HScroll>
        </SheetArea>
      </Workspace>
      <StatusBar>
        <StatusField $w={311} $mr={8} />
        <StatusField $w={491} $mr={5} />
        <StatusField $w={41}>РАСШ</StatusField>
        <StatusField $w={37}>CAPS</StatusField>
        <StatusField $w={33} $on>NUM</StatusField>
        <StatusField $w={34} $mr={6}>SCRL</StatusField>
        <StatusField $w={32}>ЗАМ</StatusField>
      </StatusBar>
      <Taskbar>
        <StartBtn>
          <Svg width="20" height="18" viewBox="0 0 20 18"><path d="M3 3c2-1.500 4-1.500 6 0l-1.500 5.500c-2-1.400-4-1.400-6 0z" fill="#e8502a"/><path d="M10.500 3.500c2 1.300 4 1.300 7 0L16 9c-2.500 1-5 1-7 0z" fill="#7cc040"/><path d="M1 9.500c2-1.400 4-1.400 6 0L5.500 15c-2-1.400-4-1.400-6 0z" fill="#4a90e8"/><path d="M8.500 10.500c2 1 4.500 1 7 0L14 16c-2.500 1-5 1-7 0z" fill="#f8c830"/></Svg>
          пуск
        </StartBtn>
        <Quick>
          <Ic><path d="M3 14L13 2" stroke="#000" strokeWidth="4"/><path d="M3 14L13 2" stroke="#f0a020" strokeWidth="2.400"/><path d="M4 5l8 7" stroke="#e8c060" strokeWidth="2"/></Ic>
          <Ic><circle cx="8" cy="8" r="5.500" fill="none" stroke="#48a8f0" strokeWidth="2.400"/><path d="M3 8h10" stroke="#48a8f0" strokeWidth="2"/><path d="M1 14C3 8 10 2 15 1" fill="none" stroke="#f0c040"/></Ic>
          <Ic><path d="M2 1h11v14H2z" fill="#fff" stroke="#2a5ab0"/><circle cx="8" cy="8" r="4" fill="#cfe4fb" stroke="#1a6ad0" strokeWidth="1.300"/><path d="M8 8l2-2" stroke="#c02020"/></Ic>
          <Chev2>»</Chev2>
        </Quick>
        <TaskBtn $w={160} $on><Ic>{icons.doc}</Ic>Проектмачта</TaskBtn>
        <TaskBtn $w={159}>
          <Ic><path d="M3 1h12v14H3z" fill="#fff" stroke="#2a3f9a"/><path d="M0 3h9v9H0z" fill="#2a4fc0"/><text x="1" y="10.500" fontSize="8" fontWeight="bold" fontFamily="Liberation Sans" fill="#fff">W</text></Ic>
          рис-отчеты - Micros...
        </TaskBtn>
        <Lang>EN</Lang>
        <Addr>Адрес:</Addr>
        <Tray>
          <TrayChevron width="17" height="17" viewBox="0 0 17 17"><circle cx="8.500" cy="8.500" r="8" fill="#2a6ae0" stroke="#cfe6ff"/><path d="M10 4.500l-4 4 4 4" fill="none" stroke="#fff" strokeWidth="2"/></TrayChevron>
          <Ic><path d="M1 3h9v7H1z" fill="#8a9ac0" stroke="#223"/><path d="M5 6h9v7H5z" fill="#c8d4ea" stroke="#223"/><path d="M5 4l10 10M15 4L5 14" stroke="#e02020" strokeWidth="2"/></Ic>
          <Ic><path d="M2 4l4-3v2h3v3H6v2z" fill="#30b030"/><path d="M3 13l9-5 3 3-8 4z" fill="#c8ccd4" stroke="#444"/></Ic>
          <Ic><path d="M2 2h4v5l6-5h3L8 9l7 6h-3L6 10v5H2z" fill="#e01020"/><path d="M8 7l7 7-5 1z" fill="#000"/></Ic>
          <Clock>6:48</Clock>
        </Tray>
      </Taskbar>
      <Dialog>
        <DlgTitle>
          <span>Отчеты о затратах</span>
          <DlgClose><Svg width="13" height="13" viewBox="0 0 13 13"><path d="M2 2l9 9M11 2l-9 9" stroke="#fff" strokeWidth="2.200"/></Svg></DlgClose>
        </DlgTitle>
        <DlgBody>
          <ListBox>
            <ReportItem><ReportThumbBox $sel><CashFlow /></ReportThumbBox><span>{mark('Движение денежных', 0)}<br/>средств</span></ReportItem>
            <ReportItem><ReportThumbBox><Generic /></ReportThumbBox>{mark('Бюджет', 0)}</ReportItem>
            <ReportItem><ReportThumbBox><Generic /></ReportThumbBox><span>{mark('Задачи с превышением', 0)}<br/>бюджета</span></ReportItem>
            <ReportItem><ReportThumbBox><Generic /></ReportThumbBox><span>{mark('Ресурсы с', 0)}<br/>превышением бюджета</span></ReportItem>
            <ReportItem><ReportThumbBox><Generic /></ReportThumbBox>{mark('Освоенный объем', 0)}</ReportItem>
          </ListBox>
          <BtnCol>
            <DlgBtn $def>{mark('Выбрать', 1)}</DlgBtn>
            <DlgBtn>{mark('Изменить...', 0)}</DlgBtn>
            <DlgBtn>Закрыть</DlgBtn>
          </BtnCol>
        </DlgBody>
      </Dialog>
    </Screen>
  );
}
